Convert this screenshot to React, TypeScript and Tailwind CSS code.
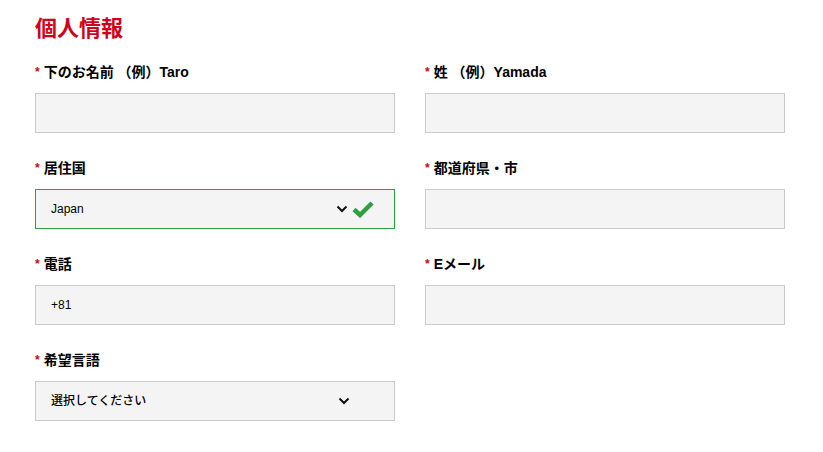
import React from "react";

// a single labelled field
interface FieldProps {
  label: string;
  value?: string;
  select?: boolean;
  valid?: boolean;
}

const Chevron = () => (
  <svg width="12" height="8" viewBox="0 0 12 8" fill="none">
    <path d="M1.5 1.5 6 6l4.5-4.5" stroke="#111" strokeWidth="2" />
  </svg>
);

const Check = () => (
  <svg width="22" height="18" viewBox="0 0 22 18">
    <path d="M2 9.5 8 15 20 3" stroke="#2ea043" strokeWidth="4.5" fill="none" strokeLinejoin="miter" />
  </svg>
);

const Field: React.FC<FieldProps> = ({ label, value, select, valid }) => (
  <div className="flex flex-col">
    <div className="flex items-center h-[18px] text-[14px] font-bold text-black">
      <span className="text-[#d0021b] mr-[4px] text-[12px]">*</span>
      {label}
    </div>
    <div
      className={
        valid
          ? "mt-[12px] h-[40px] flex items-center bg-[#f4f4f4] border border-[#2ea043] pl-[15px] pr-[20px]"
          : "mt-[12px] h-[40px] flex items-center bg-[#f4f4f4] border border-[#cccccc] pl-[15px] pr-[20px]"
      }
    >
      <span className="flex-1 text-[12px] font-medium text-black">{value}</span>
      {select && (
        <div className="flex items-center mr-[24px]">
          <Chevron />
        </div>
      )}
      {valid && (
        <div className="-ml-[20px]">
          <Check />
        </div>
      )}
    </div>
  </div>
);

const App: React.FC = () => {
  return (
    <div
      className="w-[823px] h-[452px] bg-white pl-[35px] pt-[14px]"
      style={{ fontFamily: '"Liberation Sans", "Noto Sans CJK JP", sans-serif' }}
    >
      <h1 className="text-[22px] font-bold text-[#d0021b] leading-[30px]">個人情報</h1>
      <div className="grid grid-cols-[360px_360px] gap-x-[30px] gap-y-[26px] mt-[19px]">
        <Field label="下のお名前 （例）Taro" />
        <Field label="姓 （例）Yamada" />
        <Field label="居住国" value="Japan" select valid />
        <Field label="都道府県・市" />
        <Field label="電話" value="+81" />
        <Field label="Eメール" />
        <Field label="希望言語" value="選択してください" select />
      </div>
    </div>
  );
};

export default App;
